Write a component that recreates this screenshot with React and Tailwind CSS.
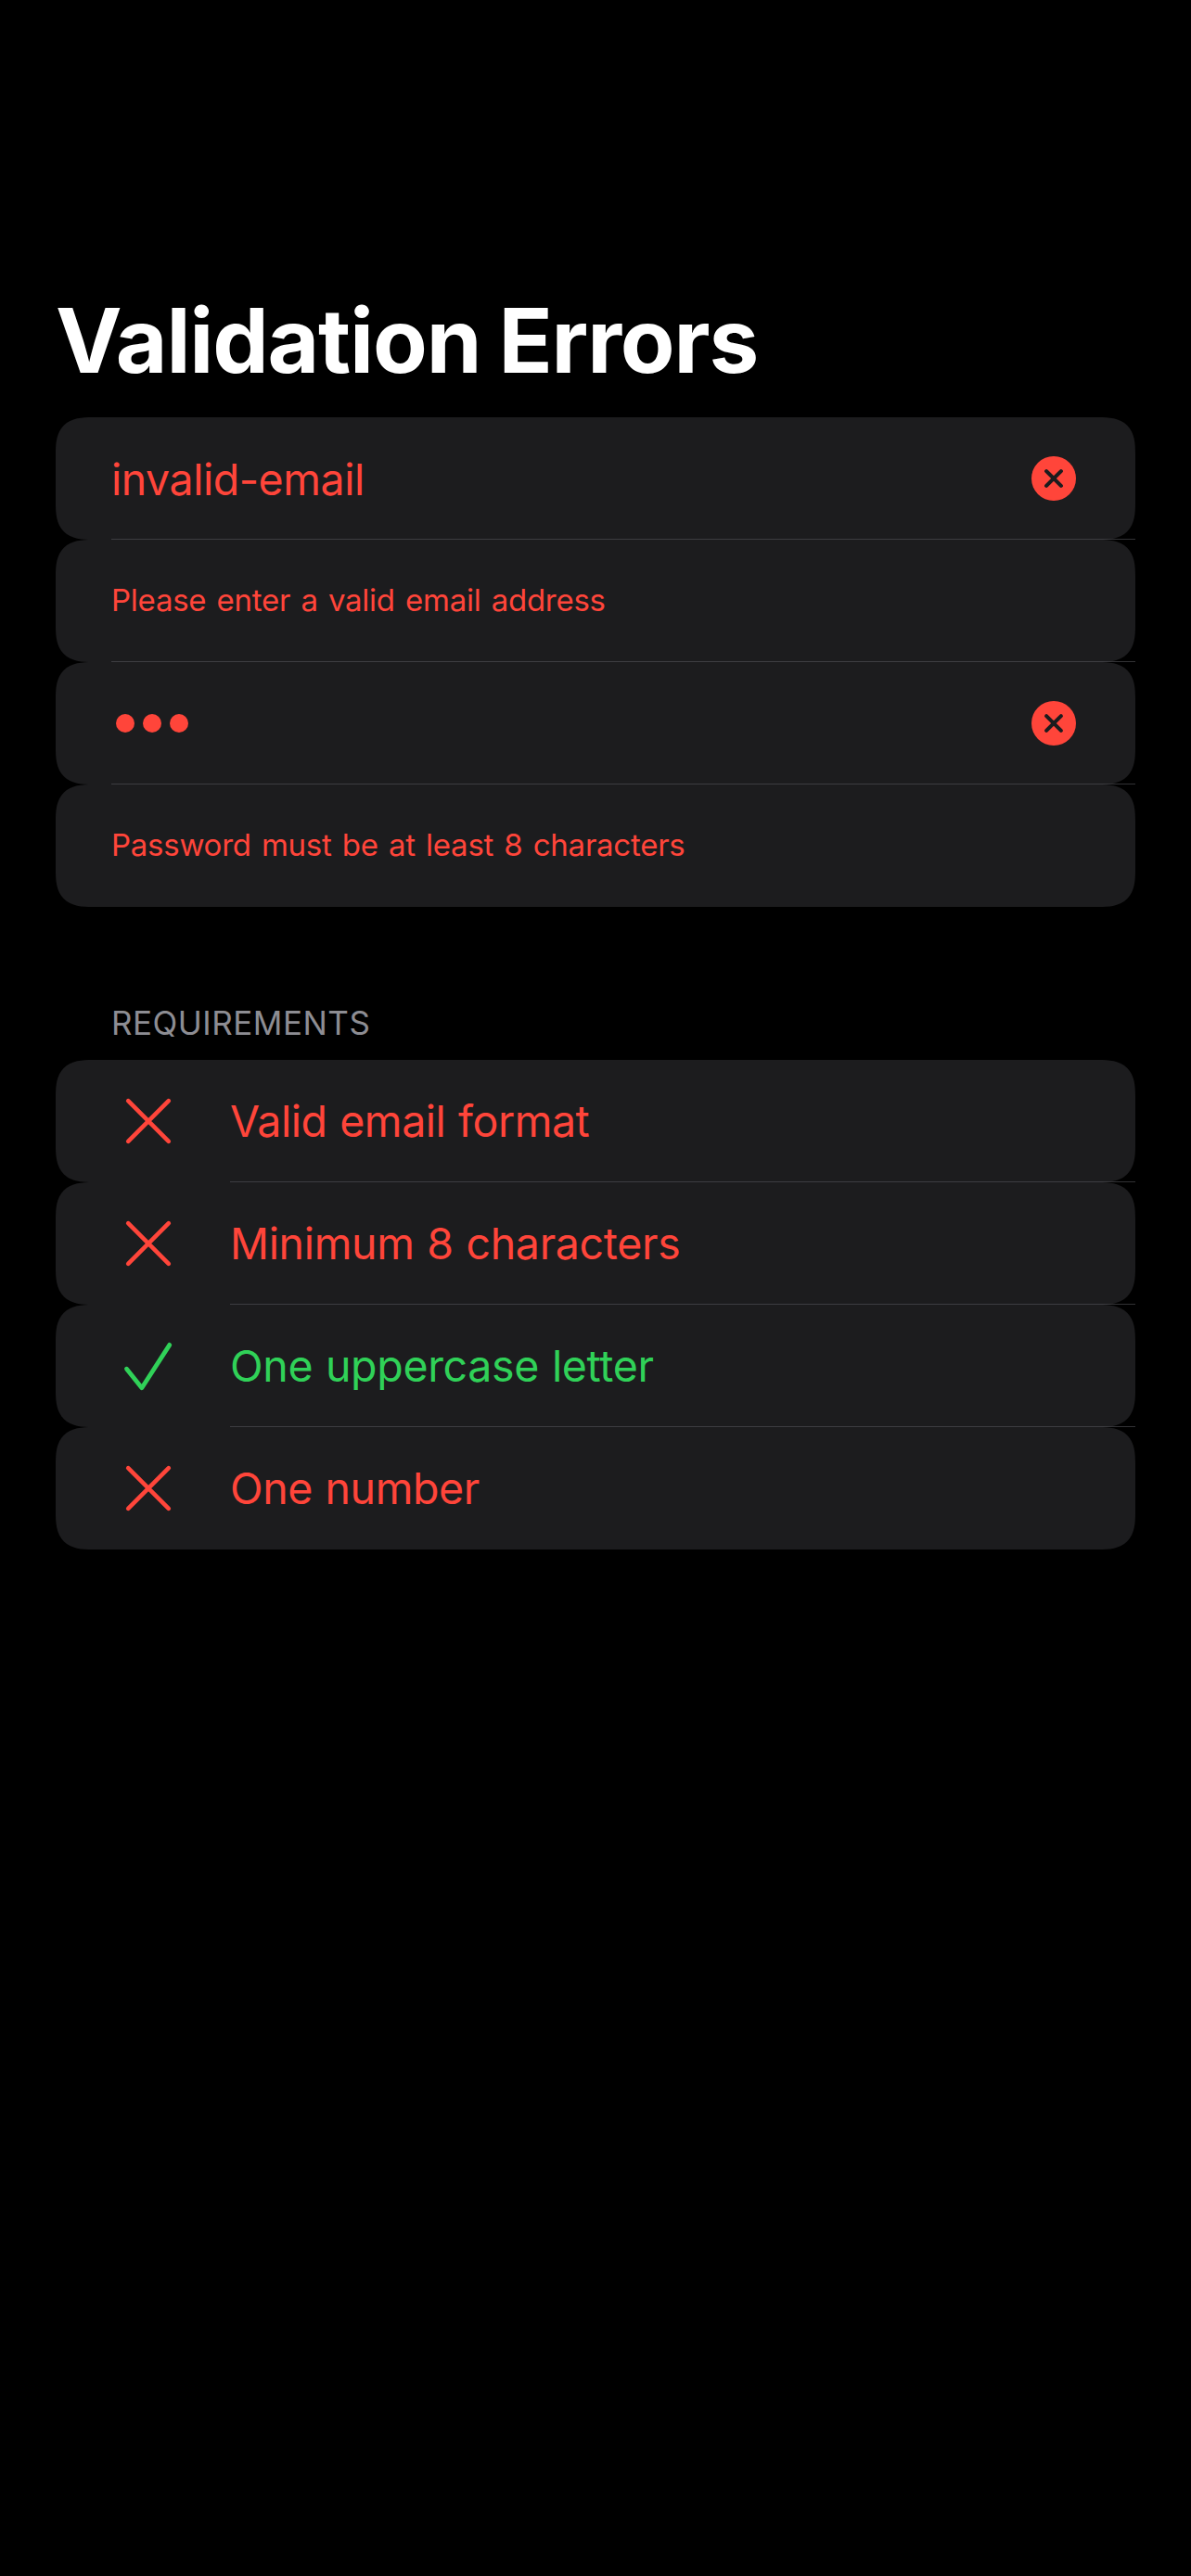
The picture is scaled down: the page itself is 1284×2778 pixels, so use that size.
const INK = {
  red: "text-[#ff453a]",
  green: "text-[#30d158]",
};

function Row({ children, separator }) {
  return (
    <li className="relative flex h-[132px] items-center rounded-[40px] bg-[#1c1c1e] [corner-shape:superellipse(1.48)]">
      {children}
      {separator && (
        <span className={`absolute right-0 bottom-0 h-px bg-[rgba(84,84,88,0.6)] ${separator}`} />
      )}
    </li>
  );
}

function ErrorBadge() {
  return (
    <svg className="mr-[64px] ml-auto size-[48px]" viewBox="0 0 48 48" fill="none">
      <circle cx="24" cy="24" r="24" fill="#ff453a" />
      <path d="M16.1 16.1 31.9 31.9M31.9 16.1 16.1 31.9" stroke="#1c1c1e" strokeWidth="4.1" strokeLinecap="round" />
    </svg>
  );
}

function CrossIcon() {
  return (
    <svg className="size-[56px]" viewBox="0 0 56 56" fill="none">
      <path d="M6.2 6.2 49.8 49.8M49.8 6.2 6.2 49.8" stroke="currentColor" strokeWidth="4.6" strokeLinecap="round" />
    </svg>
  );
}

function CheckIcon() {
  return (
    <svg className="size-[56px]" viewBox="0 0 56 56" fill="none">
      <path d="M4.5 31.2 20.9 51.7 50.8 5.4" stroke="currentColor" strokeWidth="4.8" strokeLinecap="round" strokeLinejoin="round" />
    </svg>
  );
}

const requirements = [
  { text: "Valid email format", met: false, tracking: "tracking-[-0.45px]" },
  { text: "Minimum 8 characters", met: false, tracking: "tracking-[-0.34px]" },
  { text: "One uppercase letter", met: true, tracking: "tracking-[-0.32px]" },
  { text: "One number", met: false, tracking: "tracking-[-0.42px]" },
];

function Message({ children }) {
  return (
    <p className="pb-[2px] pl-[60px] text-[33px] leading-[40px] tracking-[-0.25px] text-[#ff453a] [word-spacing:2.2px]">
      {children}
    </p>
  );
}

export default function App() {
  return (
    <main className="min-h-[2778px] w-full bg-black px-[60px] pt-[319px] font-['Inter','Liberation_Sans',sans-serif] [font-feature-settings:'calt'_0]">
      <h1 className="h-[131px] text-[96px] leading-[96px] font-bold tracking-[-1.15px] text-white [word-spacing:-2.5px]">
        Validation Errors
      </h1>

      <ul>
        <Row separator="left-[60px]">
          <span className="pt-[2px] pl-[60px] text-[46.5px] leading-[56px] tracking-[-0.48px] text-[#ff453a]">
            invalid-email
          </span>
          <ErrorBadge />
        </Row>
        <Row separator="left-[60px]">
          <Message>Please enter a valid email address</Message>
        </Row>
        <Row separator="left-[60px]">
          <span className="flex gap-[8.7px] pl-[64.8px]">
            <span className="size-[20.4px] rounded-full bg-[#ff453a]" />
            <span className="size-[20.4px] rounded-full bg-[#ff453a]" />
            <span className="size-[20.4px] rounded-full bg-[#ff453a]" />
          </span>
          <ErrorBadge />
        </Row>
        <Row>
          <Message>Password must be at least 8 characters</Message>
        </Row>
      </ul>

      <h2 className="h-[165px] pt-[103px] pl-[60px] text-[35px] leading-[44px] tracking-[0.5px] text-[#8d8d93]">
        REQUIREMENTS
      </h2>

      <ul>
        {requirements.map((item, i) => (
          <Row key={item.text} separator={i < requirements.length - 1 && "left-[188px]"}>
            <div className={`flex items-center gap-[60px] pl-[72px] ${item.met ? INK.green : INK.red}`}>
              {item.met ? <CheckIcon /> : <CrossIcon />}
              <span className={`text-[46.5px] leading-[56px] [word-spacing:1px] ${item.tracking}`}>
                {item.text}
              </span>
            </div>
          </Row>
        ))}
      </ul>
    </main>
  );
}
